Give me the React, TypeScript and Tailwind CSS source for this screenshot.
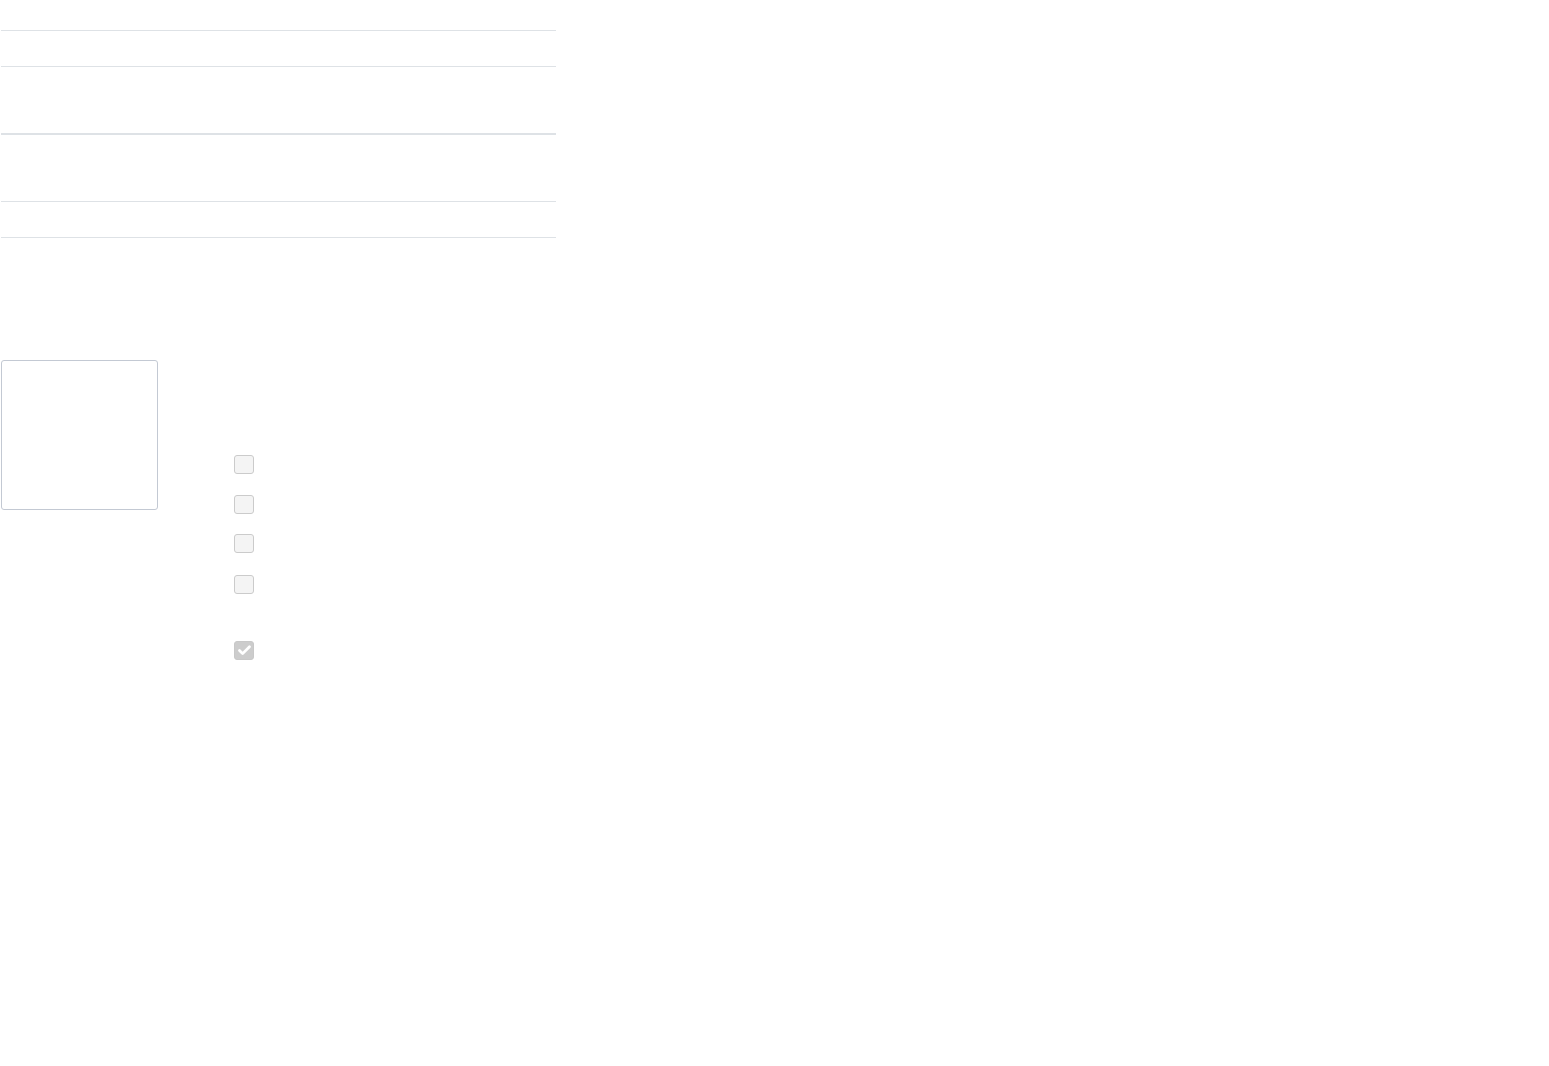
import { Check } from "lucide-react";

// Empty table rows: row height (border included) and the width of its bottom border
const rows = [
  { h: "h-[36px]", border: "border-b" },
  { h: "h-[68px]", border: "border-b-2" },
  { h: "h-[67px]", border: "border-b" },
  { h: "h-[36px]", border: "border-b" },
];

// Disabled checkboxes, top margin keeps their spacing
const boxes = [
  { mt: "mt-0", checked: false },
  { mt: "mt-[21px]", checked: false },
  { mt: "mt-[20px]", checked: false },
  { mt: "mt-[22px]", checked: false },
  { mt: "mt-[47px]", checked: true },
];

function Box({ checked }: { checked: boolean }) {
  return checked ? (
    <div className="w-[20px] h-[19px] rounded-[3px] border border-[#c8c8c8] bg-[#cccccc] flex items-center justify-center">
      <Check className="w-[15px] h-[15px] text-white" strokeWidth={4.5} />
    </div>
  ) : (
    <div className="w-[20px] h-[19px] rounded-[3px] border border-[#cbcbcb] bg-[#f4f4f4]" />
  );
}

export default function App() {
  return (
    <div className="min-h-screen bg-white" style={{ fontFamily: "'Liberation Sans', sans-serif" }}>
      {/* table */}
      <div className="pt-[30px]">
        <div className="ml-px w-[555px] border-t border-[#dee2e6]">
          {rows.map((r, i) => (
            <div key={i} className={`${r.h} ${r.border} border-[#dee2e6]`} />
          ))}
        </div>
      </div>

      {/* textarea + options */}
      <div className="mt-[122px] flex items-start">
        <div className="ml-px w-[157px] h-[150px] rounded-[3px] border border-[#c3c9d3] bg-white" />
        <div className="ml-[76px] mt-[95px] flex flex-col">
          {boxes.map((b, i) => (
            <div key={i} className={b.mt}>
              <Box checked={b.checked} />
            </div>
          ))}
        </div>
      </div>
    </div>
  );
}
